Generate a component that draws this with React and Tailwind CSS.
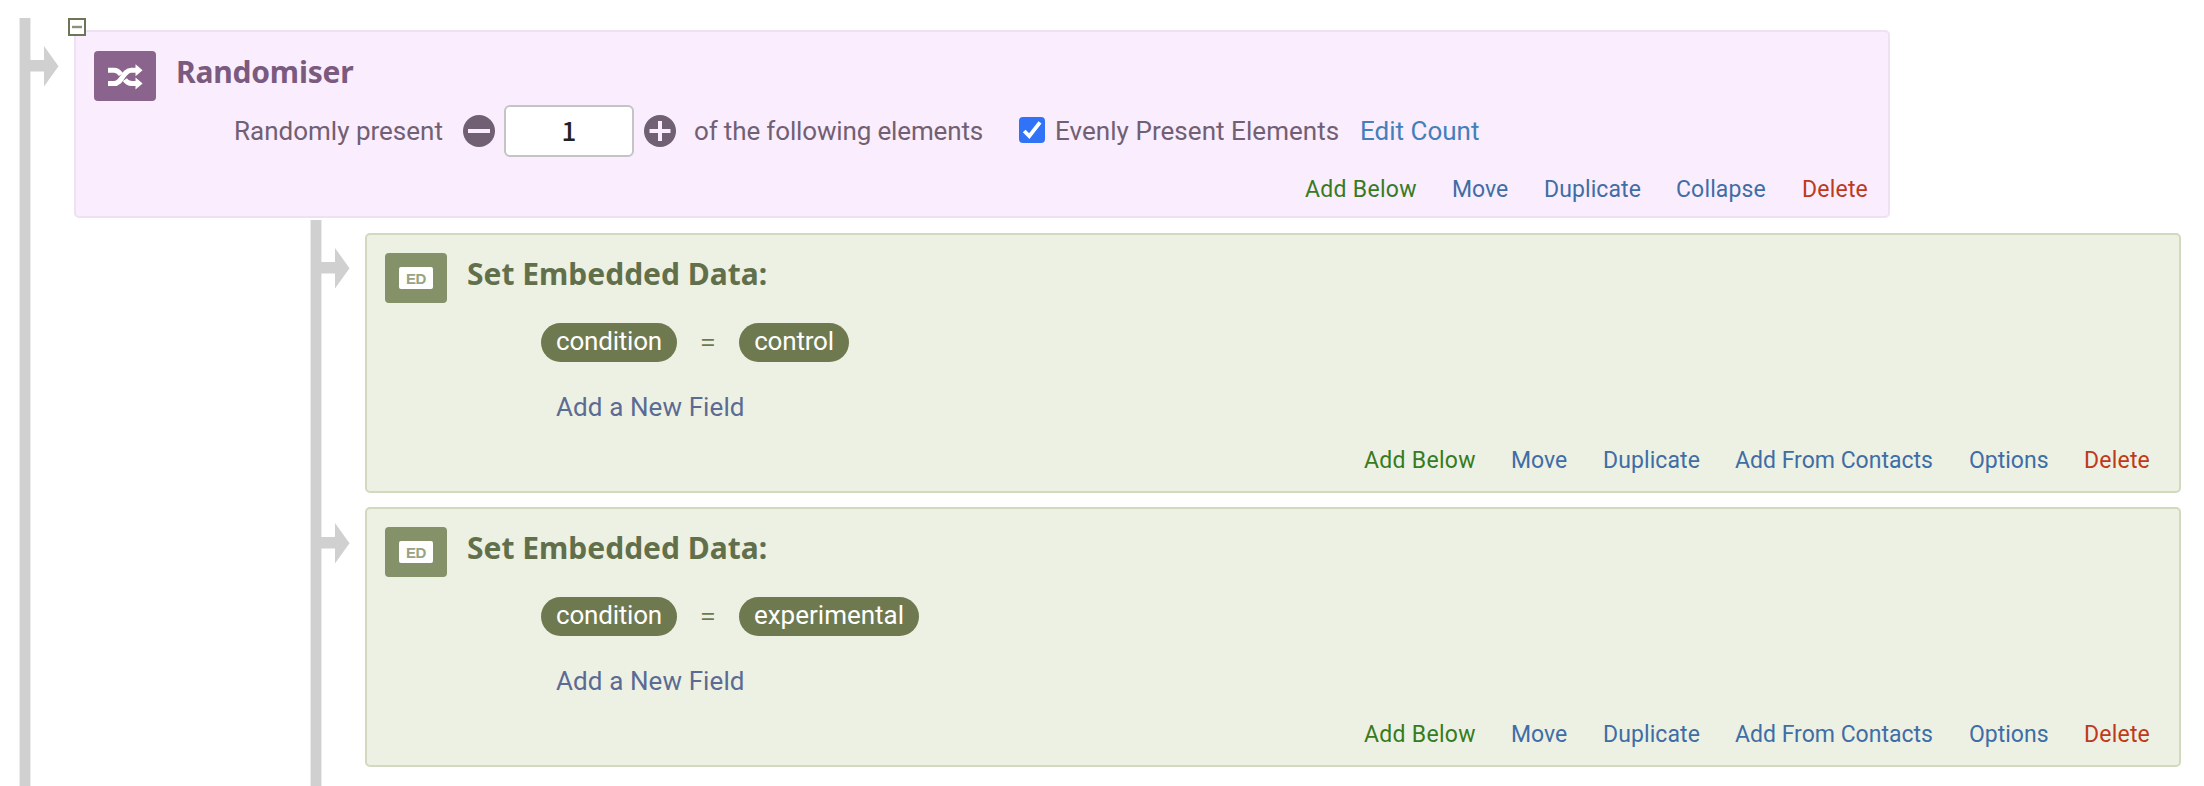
const LINK = "text-[#3f6da6]";

function Arrow({ className }) {
  return (
    <svg className={className} width="29" height="41" viewBox="0 0 29 41">
      <path d="M0 14H14V0L28.5 20.2L14 40.5V25.6H0Z" fill="#d0d0d0" />
    </svg>
  );
}

function Rail() {
  return <div className="w-3 shrink-0 self-stretch border-x border-[#ebebeb] bg-[#d0d0d0]" />;
}

function ShuffleIcon() {
  return (
    <svg className="h-[50px] w-[62px] shrink-0 rounded-[4px] bg-[#8b648e]" viewBox="0 0 62 50">
      <g fill="none" stroke="#fff" strokeWidth="5">
        <path d="M14 32.6H20C28.5 32.6 28.5 19.2 37.5 19.2H43" />
        <path d="M14 19.2H20C23 19.2 25 20.8 27 23.6" />
        <path d="M30.8 28.6C32.8 31.4 34.5 32.6 37.5 32.6H43" />
      </g>
      <path d="M41.5 13.2L48.6 19.2L41.5 25.2ZM41.5 26.6L48.6 32.6L41.5 38.6Z" fill="#fff" />
    </svg>
  );
}

function EmbeddedIcon() {
  return (
    <div className="flex h-[50px] w-[62px] shrink-0 items-center justify-center rounded-[4px] bg-[#849169]">
      <div className="flex h-[22px] w-[34px] items-center justify-center rounded-[2px] bg-white font-['Liberation_Sans',sans-serif] text-[15px] leading-none font-bold tracking-[-0.5px] text-[#98a382]">
        ED
      </div>
    </div>
  );
}

function RoundButton({ plus }) {
  return (
    <svg className="shrink-0" width="32" height="32" viewBox="0 0 32 32">
      <circle cx="16" cy="16" r="16" fill="#716073" />
      <path d={plus ? "M5.5 16H26.5M16 6V26" : "M5 16H27"} stroke="#faedfd" strokeWidth="4" />
    </svg>
  );
}

function Actions({ items, className }) {
  return (
    <div className={`flex h-[30px] items-center text-[23px] leading-[30px] ${className}`}>
      {items.map(([label, cls]) => (
        <a key={label} className={`shrink-0 whitespace-nowrap ${cls}`}>
          {label}
        </a>
      ))}
    </div>
  );
}

function Pill({ children, className }) {
  return (
    <span className={`flex h-[39px] items-center justify-center rounded-full bg-[#6e7950] pb-0.5 text-white ${className}`}>
      {children}
    </span>
  );
}

function EmbeddedData({ value, pillClass }) {
  return (
    <section className="h-[260px] w-[1816px] rounded-[5px] border-2 border-[#d3d9be] bg-[#edf1e3]">
      <header className="flex h-[68px] gap-5 pt-[18px] pl-[18px]">
        <EmbeddedIcon />
        <h2 className="font-['Noto_Sans',sans-serif] text-[30px] leading-[41px] font-bold text-[#626f4b]">
          Set Embedded Data:
        </h2>
      </header>
      <div className="mt-5 flex items-center pl-[174px]">
        <Pill className="w-[136px] tracking-[-0.2px]">condition</Pill>
        <span className="w-[62px] text-center font-['Noto_Sans',sans-serif] text-[#6e7950]">=</span>
        <Pill className={pillClass}>{value}</Pill>
      </div>
      <div className="mt-[30px] pl-[189px] leading-[30px] tracking-[0.1px] text-[#5b6b93]">Add a New Field</div>
      <Actions
        className="mt-6 pl-[997px]"
        items={[
          ["Add Below", "w-[147px] text-[#387b1d] tracking-[0.3px]"],
          ["Move", `w-[92px] ${LINK}`],
          ["Duplicate", `w-[132px] tracking-[0.1px] ${LINK}`],
          ["Add From Contacts", `w-[234px] ${LINK}`],
          ["Options", `w-[115px] ${LINK}`],
          ["Delete", "w-[97px] text-[#bd3a20] tracking-[0.2px]"],
        ]}
      />
    </section>
  );
}

function Randomiser() {
  return (
    <section className="relative h-[188px] w-[1816px] rounded-[5px] border-2 border-[#eee1f1] bg-[#faedfd]">
      <svg className="absolute -top-[14px] -left-2" width="18" height="18" viewBox="0 0 18 18">
        <rect x="1" y="1" width="16" height="16" fill="#fff" stroke="#6d7558" strokeWidth="2" />
        <path d="M4 9H14" stroke="#8c9279" strokeWidth="2.4" />
      </svg>
      <header className="flex h-[69px] gap-5 pt-[19px] pl-[18px]">
        <ShuffleIcon />
        <h2 className="font-['Noto_Sans',sans-serif] text-[30px] leading-[41px] font-bold tracking-[-0.2px] text-[#7b5a7f]">
          Randomiser
        </h2>
      </header>
      <div className="mt-1 flex h-[52px] items-center pl-[158px] text-[#716073]">
        <span className="w-[229px] whitespace-nowrap">Randomly present</span>
        <RoundButton />
        <div className="mr-2.5 ml-[9px] flex h-[52px] w-[130px] shrink-0 items-center justify-center rounded-[6px] border-2 border-[#c3c4c3] bg-white pb-[3px] font-['Noto_Sans_CJK_SC',sans-serif] text-[26px] leading-none font-medium text-[#222]">
          1
        </div>
        <RoundButton plus />
        <span className="ml-[18px] w-[325px] whitespace-nowrap tracking-[-0.15px]">of the following elements</span>
        <svg className="-mt-0.5 shrink-0" width="26" height="26" viewBox="0 0 26 26">
          <rect width="26" height="26" rx="4" fill="#3173f6" />
          <path d="M5.2 14L10.3 19.2L21 5.3" fill="none" stroke="#fff" strokeWidth="3.8" />
        </svg>
        <span className="ml-2.5 w-[305px] whitespace-nowrap tracking-[0.05px]">Evenly Present Elements</span>
        <a className="whitespace-nowrap text-[#457fba]">Edit Count</a>
      </div>
      <Actions
        className="mt-[18px] pl-[1229px]"
        items={[
          ["Add Below", "w-[147px] text-[#387b1d] tracking-[0.3px]"],
          ["Move", `w-[92px] ${LINK}`],
          ["Duplicate", `w-[132px] tracking-[0.1px] ${LINK}`],
          ["Collapse", `w-[126px] tracking-[0.15px] ${LINK}`],
          ["Delete", "text-[#bd3a20] tracking-[0.2px]"],
        ]}
      />
    </section>
  );
}

export default function App() {
  return (
    <div className="flex h-[786px] w-[2204px] overflow-hidden bg-white pt-[18px] pl-[19px] font-['Roboto',sans-serif] text-[26px] leading-[39px]">
      <Rail />
      <Arrow className="-ml-px mt-7 shrink-0" />
      <div className="ml-[15px] flex shrink-0 flex-col pt-3">
        <Randomiser />
        <div className="mt-0.5 flex flex-1 pl-[236px]">
          <Rail />
          <div className="flex flex-col gap-[14px] pt-[13px]">
            <div className="flex">
              <Arrow className="-ml-px mt-[15px] mr-[15px] shrink-0" />
              <EmbeddedData value="control" pillClass="w-[110px] tracking-[-0.2px]" />
            </div>
            <div className="flex">
              <Arrow className="-ml-px mt-4 mr-[15px] shrink-0" />
              <EmbeddedData value="experimental" pillClass="w-[180px]" />
            </div>
          </div>
        </div>
      </div>
    </div>
  );
}
